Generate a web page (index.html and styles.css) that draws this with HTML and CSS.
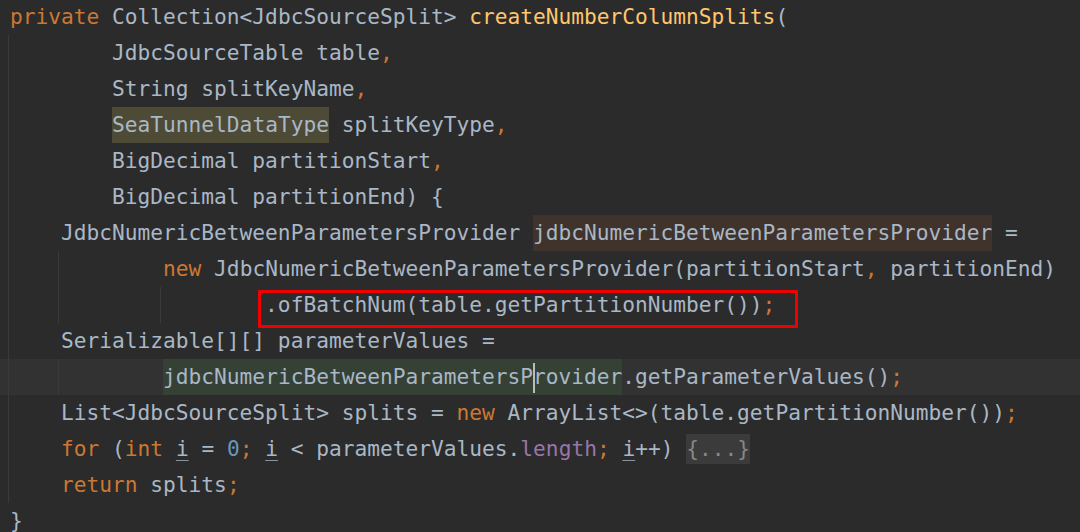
FILE: index.html
```html
<!DOCTYPE html>
<html lang="en">
<head>
<meta charset="utf-8">
<title>createNumberColumnSplits</title>
<link rel="stylesheet" href="styles.css">
</head>
<body>
<div class="editor">
<div class="ln"><span class="kw">private</span> Collection&lt;JdbcSourceSplit&gt; <span class="fn">createNumberColumnSplits</span>(</div>
<div class="ln g1">        JdbcSourceTable table<span class="kw">,</span></div>
<div class="ln g1">        String splitKeyName<span class="kw">,</span></div>
<div class="ln g1">        <span class="hl-olive">SeaTunnelDataType</span> splitKeyType<span class="kw">,</span></div>
<div class="ln g1">        BigDecimal partitionStart<span class="kw">,</span></div>
<div class="ln g1">        BigDecimal partitionEnd) {</div>
<div class="ln g1">    JdbcNumericBetweenParametersProvider <span class="hl-write">jdbcNumericBetweenParametersProvider</span> =</div>
<div class="ln g2">            <span class="kw">new</span> JdbcNumericBetweenParametersProvider(partitionStart<span class="kw">,</span> partitionEnd)</div>
<div class="ln g3">                    .ofBatchNum(table.getPartitionNumber())<span class="kw">;</span></div>
<div class="ln g1">    Serializable[][] parameterValues =</div>
<div class="ln g2 current">            <span class="hl-read">jdbcNumericBetweenParametersP<span class="caret"></span>rovider</span>.getParameterValues()<span class="kw">;</span></div>
<div class="ln g1">    List&lt;JdbcSourceSplit&gt; splits = <span class="kw">new</span> ArrayList&lt;&gt;(table.getPartitionNumber())<span class="kw">;</span></div>
<div class="ln g1">    <span class="kw">for</span> (<span class="kw">int</span> <span class="reassigned">i</span> = <span class="num">0</span><span class="kw">;</span> <span class="reassigned">i</span> &lt; parameterValues.<span class="field">length</span><span class="kw">;</span> <span class="reassigned">i</span>++) <span class="fold">{...}</span></div>
<div class="ln g1">    <span class="kw">return</span> splits<span class="kw">;</span></div>
<div class="ln">}</div>
<div class="mark"></div>
</div>
</body>
</html>
```

FILE: styles.css
```css
html, body {
  margin: 0;
  padding: 0;
  background: #2b2b2b;
}

body {
  width: 1080px;
  height: 532px;
  overflow: hidden;
}

.editor {
  position: relative;
  margin-top: -1px;
  font-family: "DejaVu Sans Mono", "Liberation Mono", monospace;
  font-size: 21.2px;
  line-height: 36px;
  color: #a9b7c6;
}

.ln {
  height: 36px;
  padding-left: 10px;
  white-space: pre;
  background-repeat: no-repeat;
}

.g1 {
  background-image: linear-gradient(#3a3a3a, #3a3a3a);
  background-size: 1px 100%;
  background-position: 8px 0;
}

.g2 {
  background-image: linear-gradient(#3a3a3a, #3a3a3a), linear-gradient(#3a3a3a, #3a3a3a);
  background-size: 1px 100%, 1px 100%;
  background-position: 8px 0, 58px 0;
}

.g3 {
  background-image: linear-gradient(#3a3a3a, #3a3a3a), linear-gradient(#3a3a3a, #3a3a3a), linear-gradient(#3a3a3a, #3a3a3a);
  background-size: 1px 100%, 1px 100%, 1px 100%;
  background-position: 8px 0, 58px 0, 160px 0;
}

.current {
  background-color: #323232;
}

.kw { color: #cc7832; }
.fn { color: #ffc66d; }
.num { color: #6897bb; }
.field { color: #9876aa; }

.reassigned {
  text-decoration: underline;
  text-decoration-color: #8a94a0;
  text-underline-offset: 4px;
  text-decoration-thickness: 1px;
}

.hl-olive,
.hl-write,
.hl-read {
  display: inline-block;
  height: 36px;
  line-height: 36px;
}

.hl-olive { background: #4d4b36; }
.hl-write { background: #3f332b; }
.hl-read { background: #344134; }

.caret {
  display: inline-block;
  width: 2px;
  height: 30px;
  margin-right: -2px;
  vertical-align: middle;
  background: #bbbbbb;
}

.fold {
  display: inline-block;
  line-height: 30px;
  background: #3b3b3b;
  color: #878787;
}

.mark {
  position: absolute;
  left: 258px;
  top: 291px;
  width: 534px;
  height: 32px;
  border: 3px solid #f00000;
}
```
